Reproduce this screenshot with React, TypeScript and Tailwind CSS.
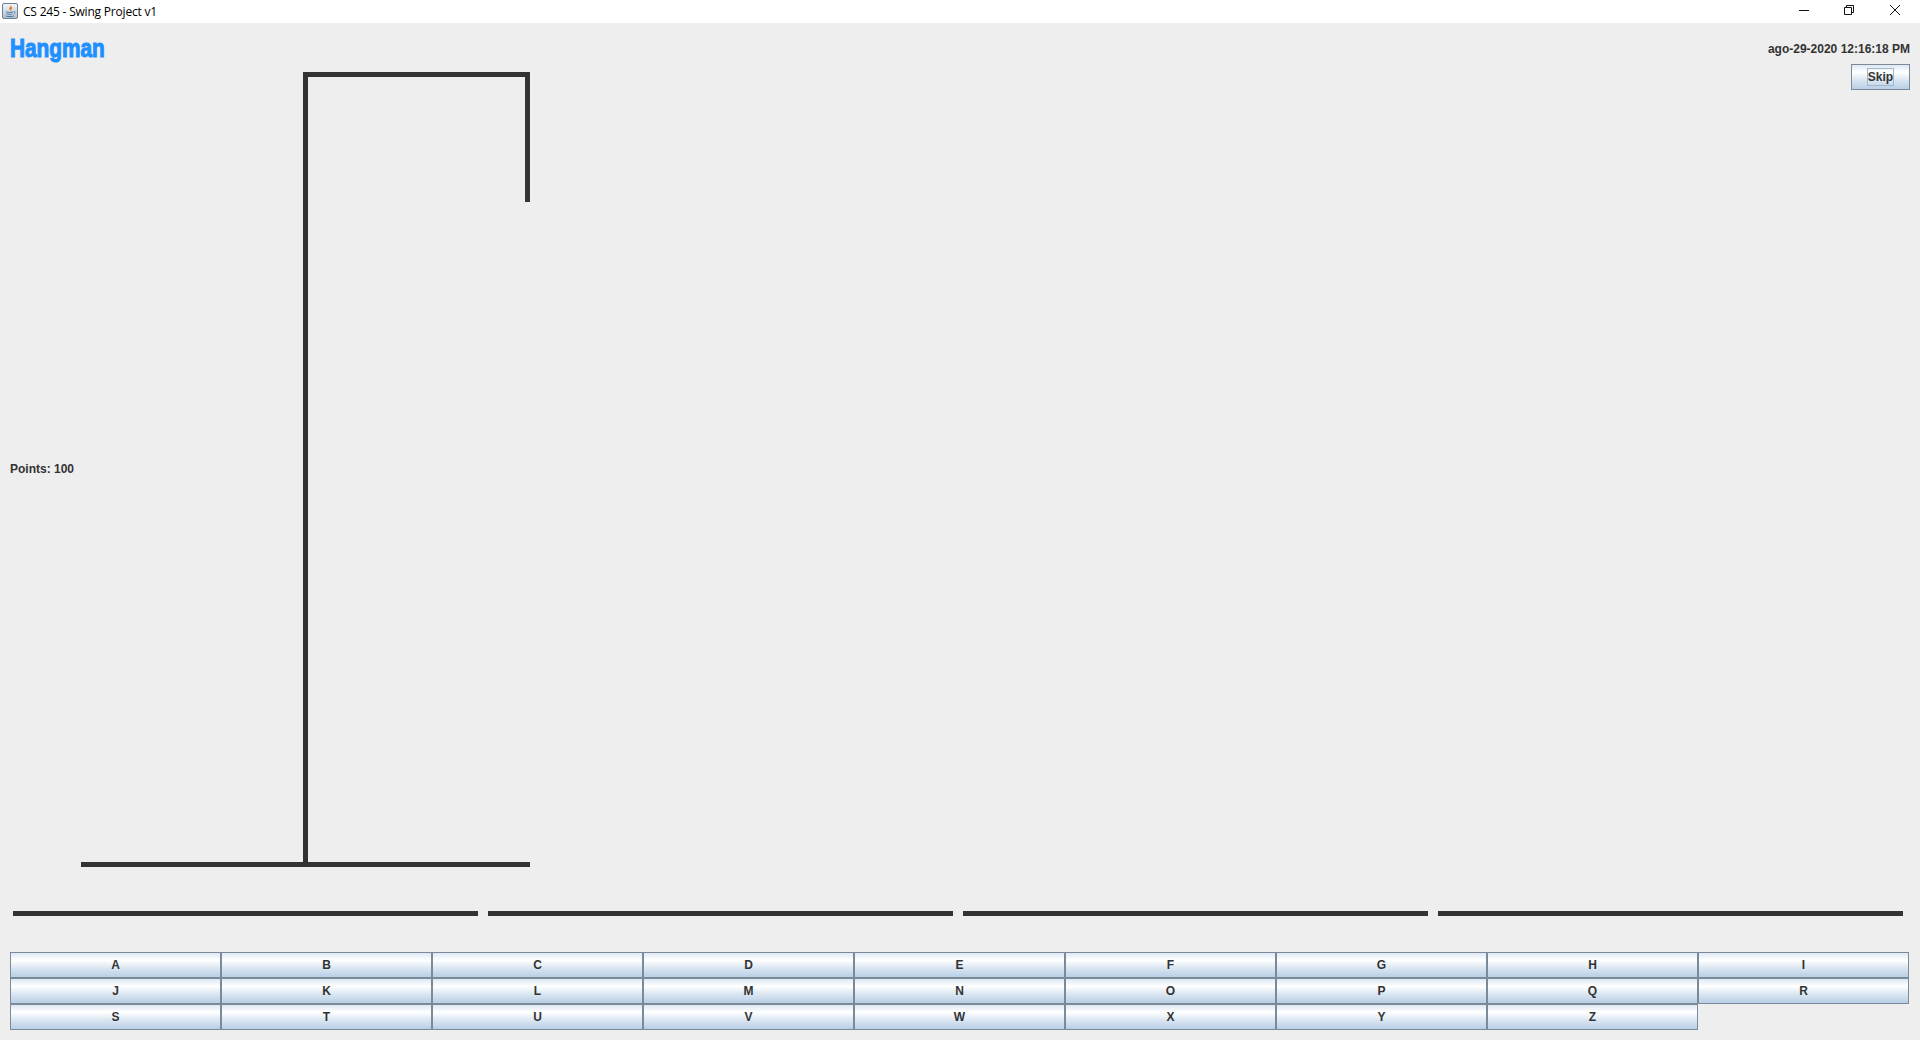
import React from "react"

const letterRows = ["ABCDEFGHI", "JKLMNOPQR", "STUVWXYZ"]
const keyClass =
  "flex h-[26px] w-[211px] items-center justify-center border border-[#7a8a99] bg-[linear-gradient(180deg,#dde8f3_0%,#ffffff_30%,#dde8f3_60%,#b8cfe5_100%)] text-[12px] font-bold text-[#333333]"

function JavaIcon() {
  return (
    <svg width="16" height="16" viewBox="0 0 16 16" className="-mt-[1px] shrink-0">
      <defs>
        <linearGradient id="tile" x1="0" y1="0" x2="0" y2="1">
          <stop offset="0" stopColor="#f4f7fa" />
          <stop offset="1" stopColor="#aebccb" />
        </linearGradient>
      </defs>
      <rect x="0.5" y="0.5" width="15" height="15" rx="1.5" fill="url(#tile)" stroke="#6f8093" />
      <path d="M8.5 2c1 1.500-2 2.500-1 4.500 .3 .6 .8 1 1 1.500-.1-1.200 2.500-2.200 1.300-4-.4-.6-.9-1.200-1.300-2z" fill="#e8762b" />
      <path d="M4 8.500c2 .6 5 .6 7 0v.8c-2 .7-5 .7-7 0zM4.500 10.500c1.800 .5 4.200 .5 6 0v.8c-1.800 .5-4.200 .5-6 0zM3.500 12.500c2.500 .8 6 .8 8.500 0v.8c-2.500 .9-6 .9-8.500 0z" fill="#3f6f9f" />
      <path d="M11.500 8.700c1.600-.3 2.400 1 .8 2" fill="none" stroke="#3f6f9f" strokeWidth="0.8" />
    </svg>
  )
}

function WindowButtons() {
  return (
    <div className="flex h-full items-start pr-[2px]">
      <div className="flex h-[20px] w-[46px] items-center justify-center">
        <svg width="10" height="10" viewBox="0 0 10 10" className="ml-[2px]">
          <path d="M0 5.500H10" stroke="#111111" strokeWidth="1" />
        </svg>
      </div>
      <div className="flex h-[20px] w-[46px] items-center justify-center">
        <svg width="10" height="10" viewBox="0 0 10 10">
          <path d="M.5 2.500H7.500V9.500H.5zM2.500 2.500V.5H9.500V7.500H7.500" fill="none" stroke="#111111" strokeWidth="1" />
        </svg>
      </div>
      <div className="flex h-[20px] w-[46px] items-center justify-center">
        <svg width="10" height="10" viewBox="0 0 10 10">
          <path d="M0 0L10 10M10 0L0 10" fill="none" stroke="#111111" strokeWidth="1" />
        </svg>
      </div>
    </div>
  )
}

function Gallows() {
  return (
    <svg width="449" height="795" viewBox="0 0 449 795" shapeRendering="crispEdges" className="shrink-0">
      <g fill="#333333">
        <rect x="222" y="0" width="227" height="5" />
        <rect x="222" y="0" width="5" height="795" />
        <rect x="444" y="0" width="5" height="130" />
        <rect x="0" y="790" width="449" height="5" />
      </g>
    </svg>
  )
}

export default function App() {
  return (
    <div className="flex h-screen w-full flex-col overflow-hidden bg-[#eeeeee] font-['Liberation_Sans',Arial,sans-serif] text-[#333333]">
      <div className="flex h-[23px] shrink-0 items-center justify-between bg-white">
        <div className="flex items-center gap-[5px] pl-[2px]">
          <JavaIcon />
          <span className="font-['Open_Sans',sans-serif] text-[12px] leading-none tracking-[-0.2px] text-black">
            CS 245 - Swing Project v1
          </span>
        </div>
        <WindowButtons />
      </div>

      <div className="flex flex-col px-[10px]">
        <div className="flex justify-between">
          <div className="flex flex-col">
            <h1 className="flex h-[49px] origin-left scale-x-[0.8] items-center text-[26px] leading-none font-bold whitespace-nowrap text-[#1e90ff] [-webkit-text-stroke:1.1px_#1e90ff]">
              Hangman
            </h1>
            <div className="flex items-center">
              <span className="-mt-[1px] w-[71px] text-[12px] font-bold">Points: 100</span>
              <Gallows />
            </div>
          </div>
          <div className="flex flex-col items-end pt-[19px]">
            <span className="text-[12px] leading-[14px] font-bold">ago-29-2020 12:16:18 PM</span>
            <button className="mt-[8px] flex h-[26px] w-[59px] items-center justify-center border border-[#7a8a99] bg-[linear-gradient(180deg,#dde8f3_0%,#ffffff_30%,#dde8f3_60%,#b8cfe5_100%)] text-[12px] font-bold">
              <span className="flex h-[18px] w-[27px] items-center justify-center border border-[#a3b8cc]">Skip</span>
            </button>
          </div>
        </div>

        <div className="mt-[44px] flex gap-[10px] pl-[3px]">
          {[0, 1, 2, 3].map((i) => (
            <div key={i} className="h-[5px] w-[465px] bg-[#333333]" />
          ))}
        </div>

        <div className="mt-[36px] flex flex-col">
          {letterRows.map((row) => (
            <div key={row} className="flex">
              {row.split("").map((letter) => (
                <button key={letter} className={keyClass}>
                  {letter}
                </button>
              ))}
            </div>
          ))}
        </div>
      </div>
    </div>
  )
}
